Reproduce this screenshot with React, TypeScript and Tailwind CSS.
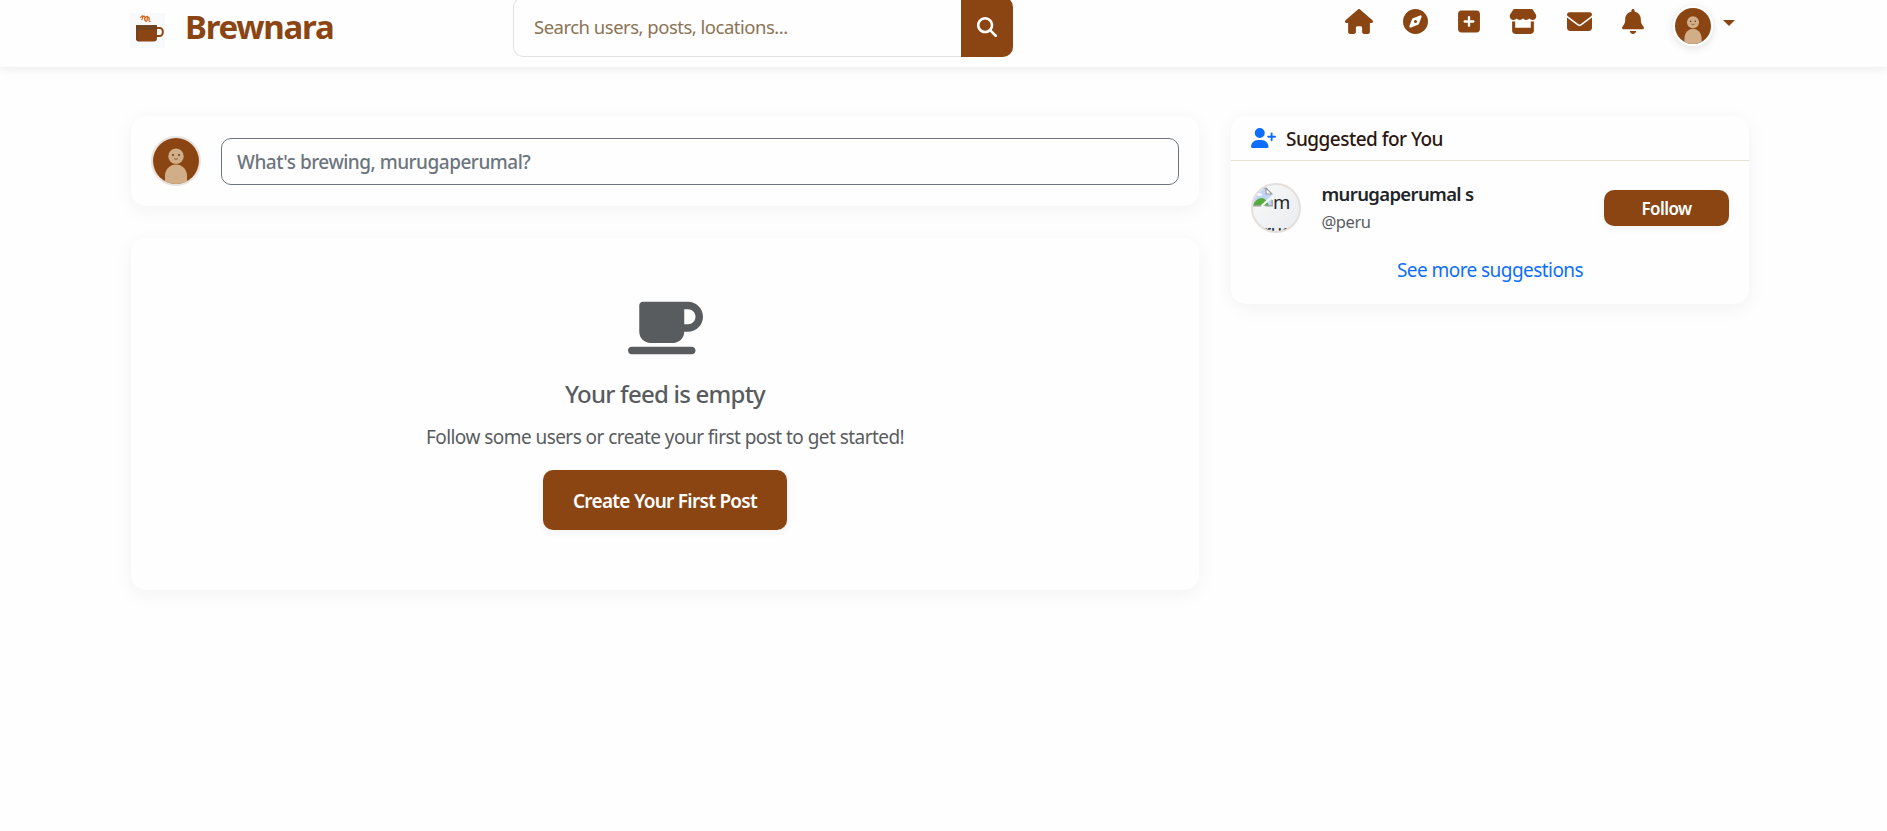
import React from "react";
import {
  FaBell,
  FaCompass,
  FaEnvelope,
  FaHouse,
  FaMagnifyingGlass,
  FaMugSaucer,
  FaSquarePlus,
  FaStore,
  FaUserPlus,
} from "react-icons/fa6";

const navItems = [
  { label: "Home", Icon: FaHouse, size: "w-[28px]" },
  { label: "Explore", Icon: FaCompass, size: "w-[25px]" },
  { label: "Create", Icon: FaSquarePlus, size: "w-[22px]" },
  { label: "Shops", Icon: FaStore, size: "w-[28px]" },
  { label: "Messages", Icon: FaEnvelope, size: "w-[25px]" },
  { label: "Notifications", Icon: FaBell, size: "w-[22px]" },
];

function DefaultAvatar() {
  return (
    <svg viewBox="0 0 46 46" className="block h-full w-full rounded-full">
      <rect width="46" height="46" fill="#8b4513" />
      <path d="M12 46V38a11 11.5 0 0 1 22 0v8z" fill="#d2ae88" />
      <circle cx="23" cy="18.3" r="7.7" fill="#d2ae88" />
      <circle cx="20" cy="17" r="1" fill="#5a3a20" />
      <circle cx="26" cy="17" r="1" fill="#5a3a20" />
      <path d="M21 20.6q2 1.2 4 0" stroke="#6b4526" strokeWidth="0.8" fill="none" />
    </svg>
  );
}

function Logo() {
  return (
    <svg viewBox="0 0 35 35" className="block h-[35px] w-[35px]">
      <rect width="35" height="35" fill="#f8f9fa" />
      <path
        d="M10.8 4.2q2.400-2.600 2-.2t-1 2.600M13 3.400q2.600-.6 1.800 1.400t1.400 3.600M15.600 4.600q2.400-2.400 2 0t-.6 2.800M18 4.400q1.800.2 1.200 2t.8 2.200"
        stroke="#d2691e"
        strokeWidth="1.300"
        fill="none"
        strokeLinecap="round"
      />
      <path d="M6 12.500h21v12.800a3.200 3.200 0 0 1-3.200 3.200H9.200A3.200 3.200 0 0 1 6 25.300z" fill="#8b4513" />
      <path d="M6 12.500h21v4.500H10.500q-2 0-2 2v6q0 2 1 3.500Q6 28.200 6 25.300z" fill="#74421a" />
      <rect x="6" y="12.200" width="21" height="1.400" fill="#654321" />
      <path d="M27 15h2.600a3.200 3.200 0 0 1 3.200 3.200v1.600a3.200 3.200 0 0 1-3.200 3.200H27" stroke="#8b4513" strokeWidth="1.900" fill="none" />
    </svg>
  );
}

function BrokenImageIcon() {
  return (
    <svg viewBox="0 0 20 20" className="block h-5 w-5 shrink-0">
      <path d="M0 1h13l6 6v12H0z" fill="#c3d4f5" />
      <path d="M2.500 8a2 2 0 0 1 3.500-1.500A2 2 0 0 1 9 8.500H2.500z" fill="#fff" />
      <path d="M0 18.500Q2.500 11 9 11q4 0 7 7.500z" fill="#56ab3c" />
      <path d="M20 7v4L9.500 19.500h-3z" fill="#f3f5f7" />
      <path d="M13 1v6h6z" fill="#fff" stroke="#999" strokeWidth="1.200" />
      <path d="M0 18.800h8M12.500 18.800H19.200V13M0 1.200h13" stroke="#999" strokeWidth="1.200" fill="none" />
    </svg>
  );
}

function Navbar() {
  return (
    <header className="flex h-[67px] items-start bg-[#fefefe] pl-[130px] text-[#8b4513] shadow-[0_2px_10px_rgba(0,0,0,0.08)]">
      <a className="flex w-[383px] items-start">
        <span className="mt-[13px]">
          <Logo />
        </span>
        <span className="ml-[20px] mt-[7px] text-[33px] font-bold leading-[40px] tracking-[-1.25px]">Brewnara</span>
      </a>

      <div className="-mt-[3px] flex h-[60px] w-[500px]">
        <div className="flex flex-1 items-center rounded-l-[10px] border border-r-0 border-[#e3e3e3] pl-[20px] text-[18.500px] tracking-[-0.5px] text-[#8b7355]">
          Search users, posts, locations...
        </div>
        <button className="flex w-[52px] items-center justify-center rounded-r-[10px] bg-[#8b4513] pr-px text-white">
          <FaMagnifyingGlass className="h-5 w-5" />
        </button>
      </div>

      <nav className="ml-[332.400px] flex items-start">
        <div className="mt-[9px] flex items-center gap-[29.700px]">
          {navItems.map(({ label, Icon, size }) => (
            <a key={label} aria-label={label} className="block">
              <Icon className={`block h-[25px] ${size}`} />
            </a>
          ))}
        </div>
        <div className="ml-[29.200px] mt-[6px] h-10 w-10 rounded-full border-2 border-white shadow-[0_2px_8px_rgba(0,0,0,0.12)]">
          <DefaultAvatar />
        </div>
        <svg viewBox="0 0 12 6" className="ml-[10px] mt-[20px] block h-[6px] w-[12px]">
          <path d="M0 0h12L6 6z" fill="#8b4513" />
        </svg>
      </nav>
    </header>
  );
}

function Composer() {
  return (
    <section className="flex h-[90px] items-center rounded-[15px] bg-[#fefefe] px-5 shadow-[0_4px_20px_rgba(0,0,0,0.05)]">
      <div className="-mt-[1px] h-[50px] w-[50px] rounded-full border-2 border-[#e8e3df]">
        <DefaultAvatar />
      </div>
      <div className="ml-[20px] mt-px flex h-[47px] flex-1 items-center rounded-[10px] border border-[#6c757d] pl-[15px] pt-[2px] text-[19px] font-medium tracking-[-0.5px] text-[#6c757d]">
        What's brewing, murugaperumal?
      </div>
    </section>
  );
}

function EmptyFeed() {
  return (
    <section className="mt-8 flex h-[352px] flex-col items-center rounded-[15px] bg-[#fefefe] pt-[60px] text-[#595c5f] shadow-[0_4px_20px_rgba(0,0,0,0.05)]">
      <FaMugSaucer className="-mt-[0.500px] block h-[60px] w-[75px]" />
      <h5 className="mt-[11.500px] text-[24px] font-medium leading-[50px] tracking-[-0.77px]">Your feed is empty</h5>
      <p className="mt-[3px] text-[19px] leading-[30px] tracking-[-0.55px]">
        Follow some users or create your first post to get started!
      </p>
      <button className="mt-[18px] h-[60px] w-[244px] rounded-[10px] bg-[#8b4513] pt-[3px] text-[19px] font-semibold tracking-[-0.72px] text-white shadow-[0_2px_8px_rgba(0,0,0,0.06)]">
        Create Your First Post
      </button>
    </section>
  );
}

function Suggestions() {
  return (
    <aside className="h-[188px] w-[518px] rounded-[15px] bg-[#fefefe] shadow-[0_4px_20px_rgba(0,0,0,0.05)]">
      <div className="flex h-[45px] items-center border-b border-[#e8dfd4] pl-5">
        <FaUserPlus className="block h-[20px] w-[25px] text-[#0d6efd]" />
        <h6 className="ml-[10px] mt-[2px] text-[19px] font-medium tracking-[-0.53px] text-[#2c1810]">Suggested for You</h6>
      </div>
      <div className="flex items-start px-5 pt-[22px]">
        <div className="h-[50px] w-[50px] overflow-hidden rounded-full border-2 border-[#e5dfdb] bg-linear-to-br from-[#f8f9fa] to-[#e9ecef] text-[18.500px] text-[#212529]">
          <div className="flex h-[22px] items-end pt-[2px]">
            <BrokenImageIcon />
            <span className="-mb-[5px] leading-[21px]">m</span>
          </div>
          <div className="pl-[4px] pt-[8px] text-center leading-[32px] tracking-[-0.5px]">rug</div>
        </div>
        <div className="-mt-[3px] ml-[20.500px] flex-1">
          <div className="text-[18.500px] font-semibold leading-[28px] tracking-[-0.65px] text-[#212529]">murugaperumal s</div>
          <div className="text-[16.500px] leading-[27px] tracking-[-0.46px] text-[#595c5f]">@peru</div>
        </div>
        <button className="mt-[7px] h-[36px] w-[125px] rounded-[10px] bg-[#8b4513] pt-px text-[17px] font-semibold tracking-[-0.58px] text-white shadow-[0_2px_8px_rgba(0,0,0,0.06)]">
          Follow
        </button>
      </div>
      <a className="mt-[20px] block text-center text-[19px] leading-[30px] tracking-[-0.56px] text-[#0d6efd]">
        See more suggestions
      </a>
    </aside>
  );
}

export default function App() {
  return (
    <div className="h-[831px] overflow-hidden bg-[#fefefe] font-['Noto_Sans','Open_Sans',sans-serif]">
      <Navbar />
      <main className="flex items-start pl-[131px] pt-[49px]">
        <div className="w-[1068px]">
          <Composer />
          <EmptyFeed />
        </div>
        <div className="ml-8">
          <Suggestions />
        </div>
      </main>
    </div>
  );
}
